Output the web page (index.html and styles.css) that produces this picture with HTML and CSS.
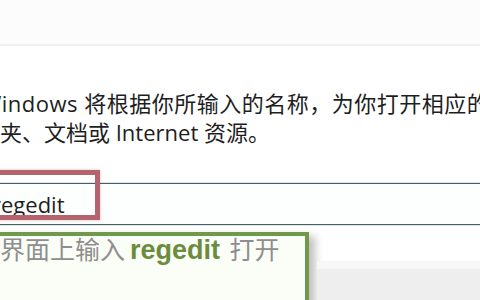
FILE: index.html
```html
<!DOCTYPE html>
<html lang="zh-CN">
<head>
  <meta charset="UTF-8">
  <title>运行 - regedit</title>
  <link rel="stylesheet" href="styles.css">
</head>
<body>

  <div class="topbar"></div>

  <div class="desc">
    <div class="line first">Windows 将根据你所输入的名称，为你打开相应的程序、文件</div>
    <div class="line">夹、文档或 Internet 资源。</div>
  </div>

  <div class="field">
    <div class="input">regedit</div>
    <div class="mark"></div>
  </div>

  <div class="bottom">
    <div class="note">界面上输入<b>regedit</b> 打开</div>
    <div class="panel"></div>
  </div>

</body>
</html>
```

FILE: styles.css
```css
body {
  margin: 0;
  background: #fff;
  font-family: "Open Sans", "Noto Sans CJK SC", sans-serif;
  color: #1e1e1e;
  overflow: hidden;
  width: 480px;
  height: 300px;
}
.topbar {
  height: 44px;
  background: #fcfcfc;
  border-bottom: 2px solid #efefef;
}
.desc {
  margin-top: 43px;
  font-size: 22px;
  line-height: 29px;
  white-space: nowrap;
}
.line.first {
  margin-left: -19px;
  letter-spacing: 0.5px;
}
.field {
  position: relative;
  margin-top: 36px;
}
.input {
  height: 40px;
  line-height: 40px;
  margin: 0 -20px;
  padding-left: 12px;
  font-size: 22px;
  color: #1e1e1e;
  background: #fdfefe;
  border-top: 1px solid #4b5e64;
  border-bottom: 1px solid #4b5e64;
  box-shadow: 0 0 0 1px #d6e8ee;
}
.mark {
  position: absolute;
  left: -20px;
  top: -13px;
  width: 110px;
  height: 40px;
  border: 5px solid #b5646d;
  box-shadow: 0 0 3px rgba(120, 40, 50, 0.3);
}
.bottom {
  display: flex;
  margin-top: 7px;
}
.note {
  width: 305px;
  height: 90px;
  margin-left: -10px;
  padding-left: 6px;
  background: #fbfdf7;
  border: 4px solid #6f9a4b;
  box-shadow: 6px 4px 8px rgba(0, 0, 0, 0.25);
  font-size: 25px;
  line-height: 26px;
  color: #8e8e8e;
  white-space: nowrap;
  overflow: hidden;
}
.note b {
  font-family: "Liberation Sans", Arial, sans-serif;
  font-size: 27px;
  margin-left: 5px;
  margin-right: 3px;
  color: #6a8c3c;
}
.panel {
  flex: 1;
  margin-top: 29px;
  margin-left: 8px;
  background: #efeeef;
  border-top: 8px solid #f7f7f7;
}
```
